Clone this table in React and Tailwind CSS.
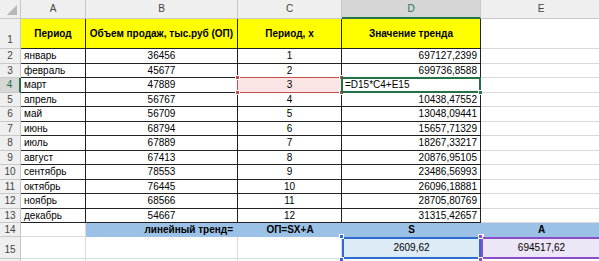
import React from 'react';

const rows = [
  ['январь', '36456', '1', '697127,2399'],
  ['февраль', '45677', '2', '699736,8588'],
  ['март', '47889', '3', null],
  ['апрель', '56767', '4', '10438,47552'],
  ['май', '56709', '5', '13048,09441'],
  ['июнь', '68794', '6', '15657,71329'],
  ['июль', '67889', '7', '18267,33217'],
  ['август', '67413', '8', '20876,95105'],
  ['сентябрь', '78553', '9', '23486,56993'],
  ['октябрь', '76445', '10', '26096,18881'],
  ['ноябрь', '68566', '11', '28705,80769'],
  ['декабрь', '54667', '12', '31315,42657'],
];

const hdr = 'flex items-center justify-center bg-[#efefef] text-[#444] border-r border-b border-[#c8c8c8]';
const grid = 'border-r border-b border-[#d9d9d9]';
const tbl = 'border-r border-b border-[#222]';

function Handles({ color }) {
  return (
    <>
      <span className={`absolute -left-[3px] -top-[3px] w-[5px] h-[5px] border border-white ${color}`} />
      <span className={`absolute -right-[3px] -top-[3px] w-[5px] h-[5px] border border-white ${color}`} />
      <span className={`absolute -left-[3px] -bottom-[3px] w-[5px] h-[5px] border border-white ${color}`} />
      <span className={`absolute -right-[3px] -bottom-[3px] w-[5px] h-[5px] border border-white ${color}`} />
    </>
  );
}

export default function App() {
  const heights = rows.map((_, i) => (i % 2 === 0 ? '15px' : '14px'));
  return (
    <div
      className="w-[599px] h-[261px] overflow-hidden bg-white text-[10px] text-black leading-none"
      style={{ fontFamily: '"Liberation Sans", Arial, sans-serif' }}
    >
      <div className="grid grid-cols-[21px_65px_152px_104px_139px_121px] grid-rows-[19px_30px_15px_14px_15px_14px_15px_14px_15px_14px_15px_14px_15px_14px_14px_22px_20px]">
        {/* column headers */}
        <div className={`${hdr} relative`}>
          <span className="absolute right-[3px] bottom-[3px] w-0 h-0 border-l-[10px] border-l-transparent border-b-[10px] border-b-[#b7b7b7]" />
        </div>
        <div className={hdr}>A</div>
        <div className={hdr}>B</div>
        <div className={hdr}>C</div>
        <div className="flex items-center justify-center bg-[#d6d6d6] text-[#217346] border-r border-[#c8c8c8] border-b-2 border-b-[#217346]">D</div>
        <div className={hdr}>E</div>

        {/* row 1 */}
        <div className={`${hdr} !items-end pb-[3px]`}>1</div>
        <div className={`${tbl} bg-[#ffff00] font-bold flex items-center justify-center`}>Период</div>
        <div className={`${tbl} bg-[#ffff00] font-bold flex items-center justify-center`}>Объем продаж, тыс.руб (ОП)</div>
        <div className={`${tbl} bg-[#ffff00] font-bold flex items-center justify-center`}>Период, x</div>
        <div className={`${tbl} bg-[#ffff00] font-bold flex items-center justify-center`}>Значение тренда</div>
        <div className={grid} />

        {rows.map((r, i) => {
          const n = i + 2;
          const active = n === 4;
          return (
            <React.Fragment key={n}>
              <div
                className={
                  active
                    ? 'flex items-center justify-center bg-[#d6d6d6] text-[#217346] border-b border-[#c8c8c8] border-r-2 border-r-[#217346]'
                    : hdr
                }
                style={{ height: heights[i] }}
              >
                {n}
              </div>
              <div className={`${tbl} flex items-center pl-[3px]`}>{r[0]}</div>
              <div className={`${tbl} flex items-center justify-center`}>{r[1]}</div>
              {active ? (
                <div className={`${tbl} relative flex items-center justify-center bg-[#fbe4e4]`}>
                  <span className="absolute -left-px -top-px -right-px -bottom-px border border-[#c0504d]" />
                  <Handles color="bg-[#c0504d]" />
                  <span className="relative">{r[2]}</span>
                </div>
              ) : (
                <div className={`${tbl} flex items-center justify-center`}>{r[2]}</div>
              )}
              {r[3] === null ? (
                <div className={`${tbl} relative flex items-center pl-[3px]`}>
                  <span className="absolute -left-px -top-px -right-px -bottom-px border-2 border-[#217346]" />
                  <span className="absolute -right-[3px] -bottom-[3px] w-[5px] h-[5px] bg-[#217346] border border-white" />
                  <span className="relative">=D15*C4+E15</span>
                </div>
              ) : (
                <div className={`${tbl} flex items-center justify-end pr-[3px]`}>{r[3]}</div>
              )}
              <div className={grid} />
            </React.Fragment>
          );
        })}

        {/* row 14 */}
        <div className={hdr}>14</div>
        <div className={grid} />
        <div className="bg-[#9bc2e6] font-bold flex items-center justify-end pr-[5px]">линейный тренд=</div>
        <div className="bg-[#9bc2e6] font-bold flex items-center justify-center">ОП=SX+A</div>
        <div className="bg-[#9bc2e6] font-bold flex items-center justify-center">S</div>
        <div className="bg-[#9bc2e6] font-bold flex items-center justify-center">A</div>

        {/* row 15 */}
        <div className={`${hdr} !items-end pb-[3px]`}>15</div>
        <div className={grid} />
        <div className={grid} />
        <div className={grid} />
        <div className="relative flex items-center justify-center bg-[#ddebf7]">
          <span className="absolute inset-0 border-2 border-[#2f6ccf]" />
          <Handles color="bg-[#2f6ccf]" />
          <span className="relative">2609,62</span>
        </div>
        <div className="relative flex items-center justify-center bg-[#ede6f6]">
          <span className="absolute inset-0 border-2 border-[#8a4fc9]" />
          <Handles color="bg-[#8a4fc9]" />
          <span className="relative">694517,62</span>
        </div>

        {/* row 16, only its top edge is in view */}
        <div className={hdr} />
        <div className={grid} />
        <div className={grid} />
        <div className={grid} />
        <div className={grid} />
        <div className={grid} />
      </div>
    </div>
  );
}
